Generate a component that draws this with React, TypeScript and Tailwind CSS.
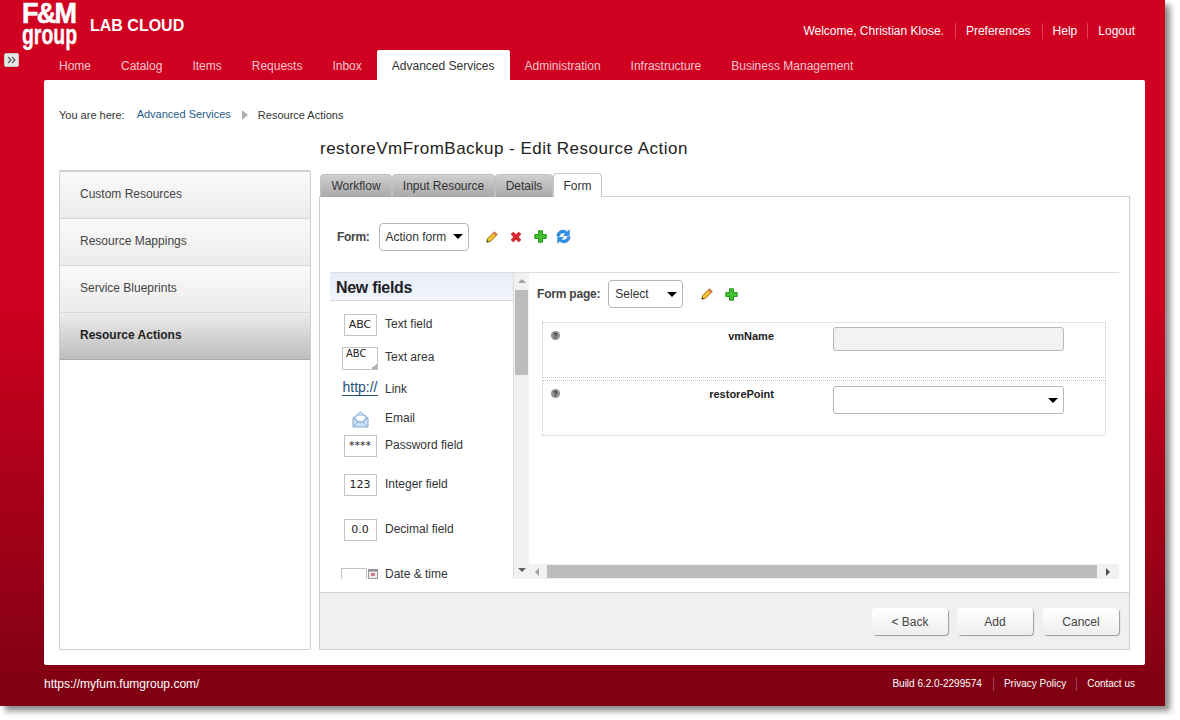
import React from 'react';

const navItems = ['Home', 'Catalog', 'Items', 'Requests', 'Inbox', 'Advanced Services', 'Administration', 'Infrastructure', 'Business Management'];
const sideItems = ['Custom Resources', 'Resource Mappings', 'Service Blueprints'];

function Pencil() {
  return (
    <svg width="12" height="12" viewBox="0 0 12 12">
      <path d="M0.8 11.2 L1.6 7.6 L8.4 0.8 L11.2 3.6 L4.4 10.4 Z" fill="#f4c430" stroke="#8f6a14" strokeWidth="0.9" />
      <path d="M8.4 0.8 L11.2 3.6 L9.9 4.9 L7.1 2.1 Z" fill="#e8705a" />
      <path d="M0.8 11.2 L1.2 9.3 L2.7 10.8 Z" fill="#222" />
    </svg>
  );
}

function RedX() {
  return (
    <svg width="12" height="12" viewBox="0 0 12 12">
      <path d="M1 3.2 L3.2 1 L6 3.6 L8.8 1 L11 3.2 L8.4 6 L11 8.8 L8.8 11 L6 8.4 L3.2 11 L1 8.8 L3.6 6 Z" fill="#d8262c" stroke="#b01c20" strokeWidth="0.5" />
    </svg>
  );
}

function GreenPlus() {
  return (
    <svg width="13" height="13" viewBox="0 0 13 13">
      <path d="M4.5 0.8 H8.5 V4.5 H12.2 V8.5 H8.5 V12.2 H4.5 V8.5 H0.8 V4.5 H4.5 Z" fill="#3fc02c" stroke="#1f8a18" strokeWidth="0.9" />
    </svg>
  );
}

function Refresh() {
  return (
    <svg width="15" height="15" viewBox="0 0 15 15">
      <path d="M0.8 7.2 C1 3.2 4.4 0.6 8 1.2 C9.4 1.4 10.5 2 11.3 2.8 L13.4 0.8 V6.8 H7.4 L9.4 4.8 C7.6 3.2 4.2 3.8 3.6 7.2 Z" fill="#2d8fe8" stroke="#1a6cc0" strokeWidth="0.4" />
      <path d="M14.2 7.8 C14 11.8 10.6 14.4 7 13.8 C5.6 13.6 4.5 13 3.7 12.2 L1.6 14.2 V8.2 H7.6 L5.6 10.2 C7.4 11.8 10.8 11.2 11.4 7.8 Z" fill="#2d8fe8" stroke="#1a6cc0" strokeWidth="0.4" />
    </svg>
  );
}

function Help() {
  return (
    <span className="flex h-[9px] w-[9px] items-center justify-center rounded-full bg-[#8f8f8f] text-[7px] font-bold leading-none text-[#222]">?</span>
  );
}

function Caret() {
  return <span className="h-0 w-0 border-x-[5px] border-t-[5px] border-x-transparent border-t-black" />;
}

function SelectBox({ label, width }: { label: string; width: string }) {
  return (
    <div className={`flex h-[28px] items-center justify-between rounded-[4px] border border-[#b5b5b5] bg-white pl-[6px] pr-[5px] text-[12px] text-[#333] ${width}`}>
      <span>{label}</span>
      <Caret />
    </div>
  );
}

function FieldBox({ text }: { text: string }) {
  return (
    <div className="flex h-[22px] w-[33px] items-center justify-center border border-[#c4c4c4] bg-white font-['DejaVu_Sans'] text-[11px] text-[#222]">
      {text}
    </div>
  );
}

function PaletteRow({ icon, label, height }: { icon: React.ReactNode; label: string; height: string }) {
  return (
    <div className={`flex items-start ${height}`}>
      <div className="flex w-[55px] shrink-0 justify-center pl-[5px]">{icon}</div>
      <span className="mt-[3px] text-[12px] leading-[14px] text-[#333]">{label}</span>
    </div>
  );
}

function FooterButton({ label, className = '' }: { label: string; className?: string }) {
  return (
    <button className={`flex h-[27px] w-[76px] items-center justify-center rounded-[4px] bg-gradient-to-b from-white to-[#eeeeee] text-[12px] text-[#444] shadow-[1px_1px_1px_#9a9a9a] ${className}`}>
      {label}
    </button>
  );
}

export default function App() {
  return (
    <div className="h-[720px] w-[1180px] overflow-hidden bg-white font-['Liberation_Sans',sans-serif]">
      <div className="relative flex h-[706px] w-[1165px] flex-col bg-[linear-gradient(to_bottom,#cf0020_0%,#cf0020_42%,#7d0012_100%)] shadow-[5px_5px_6px_#8a8a8a]">
        {/* header */}
        <div className="flex h-[50px] shrink-0 items-start">
          <div className="ml-[22px] mt-[1px] flex w-[56px] flex-col items-start whitespace-nowrap font-bold text-white">
            <span className="h-[24px] origin-left scale-x-[0.9] text-[30px] leading-[24px] tracking-[-2px] [-webkit-text-stroke:0.6px_white]">F&amp;M</span>
            <span className="h-[23px] origin-left scale-x-[0.72] text-[27px] leading-[20px] [-webkit-text-stroke:0.4px_white]">group</span>
          </div>
          <span className="ml-[12px] mt-[17px] text-[16px] font-bold leading-[18px] text-white">LAB CLOUD</span>
          <div className="ml-auto mr-[30px] mt-[23px] flex items-center text-[12px] leading-[16px] text-white">
            <span className="pr-[11px]">Welcome, Christian Klose.</span>
            <span className="border-l border-[#e04058] pl-[10px] pr-[11px]">Preferences</span>
            <span className="border-l border-[#e04058] px-[10px]">Help</span>
            <span className="border-l border-[#e04058] pl-[10px]">Logout</span>
          </div>
        </div>
        <button className="absolute left-[4px] top-[53px] flex h-[14px] w-[15px] items-center justify-center rounded-[2px] border border-[#c8c8c8] bg-[#e8e8e8]">
          <svg width="9" height="8" viewBox="0 0 9 8" fill="none" stroke="#555" strokeWidth="1.2">
            <path d="M1 1 L4 4 L1 7 M5 1 L8 4 L5 7" />
          </svg>
        </button>

        {/* nav */}
        <div className="ml-[44px] flex h-[30px] shrink-0 items-stretch text-[12px]">
          {navItems.map((item) =>
            item === 'Advanced Services' ? (
              <div key={item} className="flex items-center rounded-t-[2px] bg-white px-[15px] pt-[1px] text-[#333]">
                {item}
              </div>
            ) : (
              <div key={item} className="flex items-center px-[15px] pt-[1px] text-[#f6c6cf]">
                {item}
              </div>
            ),
          )}
        </div>

        {/* main card */}
        <div className="ml-[44px] flex h-[585px] w-[1101px] shrink-0 flex-col rounded-[2px] bg-white px-[15px]">
          <div className="mt-[27px] flex h-[16px] items-center text-[11px] text-[#333]">
            <span>You are here:</span>
            <span className="ml-[12px] pb-[2px] text-[#1f5c8a]">Advanced Services</span>
            <span className="ml-[11px] h-0 w-0 border-y-[5px] border-l-[6px] border-y-transparent border-l-[#b0b0b0]" />
            <span className="ml-[10px]">Resource Actions</span>
          </div>
          <div className="ml-[261px] mt-[14px] h-[24px] text-[17px] leading-[24px] tracking-[0.48px] text-[#222]">restoreVmFromBackup - Edit Resource Action</div>
          <div className="mt-[12px] flex min-h-0 flex-1 gap-[8px] pb-[15px]">
            {/* sidebar */}
            <div className="-mt-[3px] flex w-[252px] shrink-0 flex-col rounded-[2px] border border-t-2 border-[#d0d0d0]">
              {sideItems.map((item) => (
                <div key={item} className="flex h-[47px] items-center border-b border-[#d8d8d8] bg-gradient-to-b from-[#fafafa] to-[#ebebeb] pb-[2px] pl-[20px] text-[12px] text-[#444]">
                  {item}
                </div>
              ))}
              <div className="flex h-[47px] items-center border-b border-[#a8a8a8] bg-gradient-to-b from-[#ececec] to-[#bdbdbd] pb-[2px] pl-[20px] text-[12px] font-bold text-[#222]">Resource Actions</div>
            </div>

            {/* content */}
            <div className="flex min-w-0 flex-1 flex-col">
              <div className="relative z-10 flex h-[24px] items-end pl-[1px] text-[12px]">
                {[
                  ['Workflow', 'w-[72px]'],
                  ['Input Resource', 'w-[103px]'],
                  ['Details', 'w-[58px]'],
                ].map(([tab, w]) => (
                  <div key={tab} className={`flex h-[23px] items-center justify-center rounded-t-[4px] border border-b-0 border-[#c0c0c0] bg-gradient-to-b from-[#cfcfcf] to-[#a9a9a9] text-[#333] ${w}`}>
                    {tab}
                  </div>
                ))}
                <div className="flex h-[24px] w-[49px] items-center justify-center rounded-t-[4px] border border-b-0 border-[#c8c8c8] bg-white text-[#333]">Form</div>
              </div>
              <div className="-mt-px flex min-h-0 flex-1 flex-col border border-[#cfcfcf]">
                <div className="flex min-h-0 flex-1 flex-col px-[10px]">
                  <div className="flex h-[76px] shrink-0 items-center border-b border-[#dcdcdc] pl-[7px] pt-[4px]">
                    <span className="text-[12px] font-bold tracking-[-0.3px] text-[#444]">Form:</span>
                    <SelectBox label="Action form" width="ml-[9px] w-[90px]" />
                    <span className="ml-[17px] flex items-center">
                      <Pencil />
                      <span className="ml-[12px] flex"><RedX /></span>
                      <span className="ml-[12px] flex"><GreenPlus /></span>
                      <span className="ml-[9px] flex"><Refresh /></span>
                    </span>
                  </div>
                  <div className="flex min-h-0 flex-1">
                    {/* palette */}
                    <div className="flex w-[199px] shrink-0">
                      <div className="flex w-[184px] flex-col overflow-hidden border-r border-[#dcdcdc]">
                        <div className="flex h-[28px] shrink-0 items-center border-b border-[#d4d4d4] bg-gradient-to-b from-[#e6ecf9] to-[#f2f5fc] pl-[6px] pt-[2px] text-[16px] font-bold tracking-[-0.3px] text-[#222]">New fields</div>
                        <div className="flex flex-col pt-[13px]">
                          <PaletteRow height="h-[33px]" label="Text field" icon={<FieldBox text="ABC" />} />
                          <PaletteRow height="h-[32px]" label="Text area" icon={
                            <div className="relative h-[23px] w-[36px] border border-[#c4c4c4] bg-white pl-[3px] font-['DejaVu_Sans'] text-[10px] leading-[11px] text-[#222]">
                              ABC
                              <span className="absolute bottom-0 right-0 h-[6px] w-[6px] bg-[linear-gradient(135deg,transparent_50%,#b0b0b0_50%)]" />
                            </div>
                          } />
                          <PaletteRow height="h-[29px]" label="Link" icon={<span className="border-b border-[#1f4f7a] text-[14px] leading-[16px] text-[#1f4f7a]">http://</span>} />
                          <PaletteRow height="h-[27px]" label="Email" icon={
                            <svg width="17" height="17" viewBox="0 0 17 17" className="mt-[3px]">
                              <path d="M1 7 L8.5 1 L16 7 V16 H1 Z" fill="#cfe2f7" stroke="#7fa9d6" />
                              <rect x="4" y="4.5" width="9" height="6" fill="#fff" stroke="#9dbde0" strokeWidth="0.7" />
                              <path d="M1 7 L8.5 12 L16 7 M1 16 L6.5 10.5 M16 16 L10.5 10.5" fill="none" stroke="#7fa9d6" />
                            </svg>
                          } />
                          <PaletteRow height="h-[39px]" label="Password field" icon={<FieldBox text="****" />} />
                          <PaletteRow height="h-[45px]" label="Integer field" icon={<FieldBox text="123" />} />
                          <PaletteRow height="h-[45px]" label="Decimal field" icon={<FieldBox text="0.0" />} />
                          <PaletteRow height="h-[20px]" label="Date & time" icon={
                            <div className="-ml-[2px] mt-[4px] flex items-start">
                              <div className="h-[14px] w-[26px] border border-b-0 border-[#c4c4c4]" />
                              <svg width="10" height="10" viewBox="0 0 10 10" className="ml-[1px] mt-[1px]">
                                <rect x="0.5" y="0.5" width="9" height="9" fill="#ececec" stroke="#9a9a9a" />
                                <rect x="0.5" y="0.5" width="9" height="2" fill="#8c8c9c" />
                                <rect x="3" y="4" width="4" height="3" fill="#d07a8a" />
                              </svg>
                            </div>
                          } />
                        </div>
                      </div>
                      {/* vertical scrollbar */}
                      <div className="flex w-[15px] flex-col items-center bg-[#f1f1f1]">
                        <span className="mt-[6px] h-0 w-0 border-x-[4px] border-b-[4px] border-x-transparent border-b-[#a0a0a0]" />
                        <div className="mt-[7px] h-[85px] w-[13px] bg-[#bcbcbc]" />
                        <span className="mb-[7px] mt-auto h-0 w-0 border-x-[4px] border-t-[4px] border-x-transparent border-t-[#606060]" />
                      </div>
                    </div>

                    {/* form preview */}
                    <div className="flex min-w-0 flex-1 flex-col">
                      <div className="min-h-0 flex-1 overflow-hidden">
                        <div className="mt-[6px] flex h-[30px] items-center pl-[8px]">
                          <span className="text-[12px] font-bold tracking-[-0.2px] text-[#444]">Form page:</span>
                          <SelectBox label="Select" width="ml-[8px] w-[75px]" />
                          <span className="ml-[18px] flex items-center">
                            <Pencil />
                            <span className="ml-[12px] flex"><GreenPlus /></span>
                          </span>
                        </div>
                        <div className="ml-[13px] mr-[13px] mt-[13px] flex h-[114px] flex-col gap-[2px] text-[11px] font-bold text-[#222]">
                          <div className="flex h-[56px] items-start border border-dotted border-[#c8c8c8] pl-[8px] pt-[8px]">
                            <Help />
                            <span className="-mt-[3px] w-[214px] shrink-0 text-right">vmName</span>
                            <div className="-mt-[4px] ml-[59px] h-[24px] w-[231px] rounded-[3px] border border-[#b8b8b8] bg-[#f2f2f2]" />
                          </div>
                          <div className="flex h-[56px] items-start border border-dotted border-[#c8c8c8] pl-[8px] pt-[8px]">
                            <Help />
                            <span className="-mt-[3px] w-[214px] shrink-0 text-right">restorePoint</span>
                            <div className="-mt-[3px] ml-[59px] flex h-[28px] w-[231px] items-center justify-end rounded-[3px] border border-[#b8b8b8] bg-white pr-[5px]">
                              <Caret />
                            </div>
                          </div>
                        </div>
                      </div>
                      {/* horizontal scrollbar */}
                      <div className="flex h-[15px] shrink-0 items-center bg-[#f1f1f1]">
                        <span className="ml-[6px] h-0 w-0 border-y-[4px] border-r-[4px] border-y-transparent border-r-[#a0a0a0]" />
                        <div className="ml-[8px] h-[13px] w-[550px] bg-[#bcbcbc]" />
                        <span className="ml-[9px] h-0 w-0 border-y-[4px] border-l-[4px] border-y-transparent border-l-[#505050]" />
                      </div>
                    </div>
                  </div>
                </div>
                <div className="mt-[13px] flex h-[57px] shrink-0 items-center justify-end gap-[9px] border-t border-[#d0d0d0] bg-[#f0f0f0] pr-[10px] pt-[1px]">
                  <FooterButton label="< Back" />
                  <FooterButton label="Add" />
                  <FooterButton label="Cancel" className="ml-px" />
                </div>
              </div>
            </div>
          </div>
        </div>

        {/* footer */}
        <div className="flex min-h-0 flex-1 items-center pb-[4px] pl-[44px] pr-[30px] text-white">
          <span className="text-[12px]">https://myfum.fumgroup.com/</span>
          <div className="ml-auto flex items-center text-[10px] leading-[14px]">
            <span className="pr-[11px]">Build 6.2.0-2299574</span>
            <span className="border-l border-[#a04050] px-[10px]">Privacy Policy</span>
            <span className="border-l border-[#a04050] pl-[10px]">Contact us</span>
          </div>
        </div>
      </div>
    </div>
  );
}
